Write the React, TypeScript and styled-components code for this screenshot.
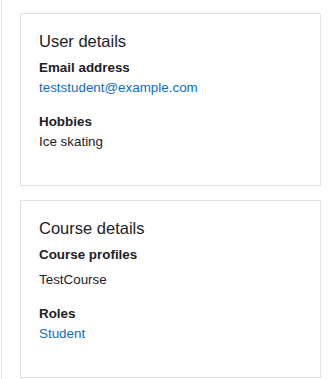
import React from 'react';
import styled, { createGlobalStyle } from 'styled-components';

const GlobalStyle = createGlobalStyle`
  html, body {
    margin: 0;
    padding: 0;
    background: #fff;
  }
  body {
    font-family: "Liberation Sans", Arial, sans-serif;
    font-size: 13.4px;
    line-height: 20px;
    color: #1d2125;
  }
`;

// the page region, with the drawer edge on its left
const Page = styled.main`
  min-height: 100vh;
  box-sizing: border-box;
  margin-left: 1px;
  border-left: 1px solid #dee2e6;
  padding: 13px 8px 0 18px;
`;

const Card = styled.section`
  width: 301px;
  box-sizing: border-box;
  border: 1px solid #dee2e6;
  padding: 18px 18px 18px;
  & + & {
    margin-top: 14px;
  }
`;

const Title = styled.h3`
  margin: 0 0 6px;
  font-size: 16.5px;
  font-weight: 400;
  line-height: 1.2;
  color: #1d2125;
`;

const List = styled.dl`
  margin: 0;
`;

const Term = styled.dt`
  font-weight: 700;
`;

const Value = styled.dd`
  margin: 0 0 14.5px;
`;

const Items = styled.ul`
  list-style: none;
  margin: 5px 0 0;
  padding: 0;
`;

const Link = styled.a`
  color: #0f6cbf;
  text-decoration: none;
`;

interface Detail {
  label: string;
  value: string;
  link?: boolean;
  list?: boolean;
}

const sections: { title: string; details: Detail[] }[] = [
  {
    title: 'User details',
    details: [
      { label: 'Email address', value: 'teststudent@example.com', link: true },
      { label: 'Hobbies', value: 'Ice skating' },
    ],
  },
  {
    title: 'Course details',
    details: [
      { label: 'Course profiles', value: 'TestCourse', list: true },
      { label: 'Roles', value: 'Student', link: true },
    ],
  },
];

function App() {
  return (
    <>
      <GlobalStyle />
      <Page>
        {sections.map((s) => (
          <Card key={s.title}>
            <Title>{s.title}</Title>
            <List>
              {s.details.map((d) => (
                <React.Fragment key={d.label}>
                  <Term>{d.label}</Term>
                  <Value>
                    {d.list ? (
                      <Items>
                        <li>{d.value}</li>
                      </Items>
                    ) : d.link ? (
                      <Link href="#">{d.value}</Link>
                    ) : (
                      d.value
                    )}
                  </Value>
                </React.Fragment>
              ))}
            </List>
          </Card>
        ))}
      </Page>
    </>
  );
}

export default App;
